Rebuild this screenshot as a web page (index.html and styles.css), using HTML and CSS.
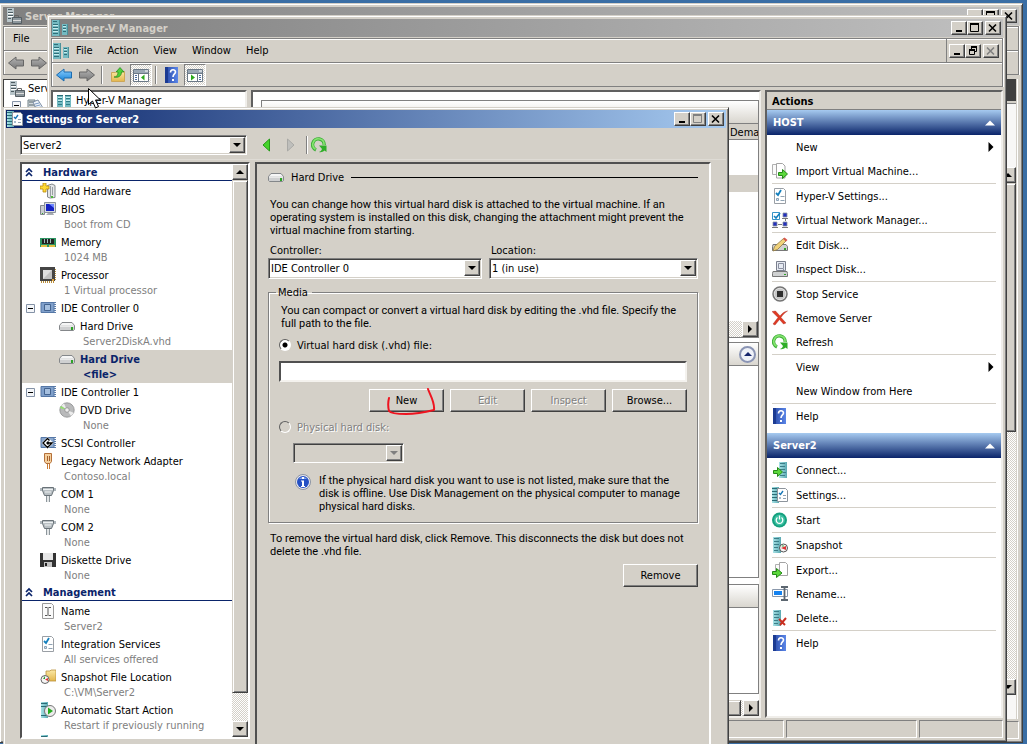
FILE: index.html
```html
<!DOCTYPE html>
<html lang="en">
<head>
<meta charset="UTF-8">
<title>Hyper-V Manager</title>
<link rel="stylesheet" href="styles.css">
</head>
<body>

<!-- Icon set, 16x16 -->
<svg class="sprite" aria-hidden="true">
  <defs>
    <linearGradient id="gBlue" x2="0" y2="1"><stop offset="0" stop-color="#8fd0ff"/><stop offset="1" stop-color="#1583d8"/></linearGradient>
    <linearGradient id="gGray" x2="0" y2="1"><stop offset="0" stop-color="#b4b4b4"/><stop offset="1" stop-color="#777"/></linearGradient>
    <linearGradient id="gTeal"><stop offset="0" stop-color="#a8e2e6"/><stop offset="1" stop-color="#5aa9b2"/></linearGradient>
    <linearGradient id="gHelp"><stop offset="0" stop-color="#2748a5"/><stop offset="1" stop-color="#5b86e8"/></linearGradient>
    <linearGradient id="gFolder" x2="0" y2="1"><stop offset="0" stop-color="#fbe9a6"/><stop offset="1" stop-color="#e3b64c"/></linearGradient>
  </defs>
  <symbol id="i-back" viewBox="0 0 16 16"><path d="M.5 8 8 2v3h7.500v6H8v3z" fill="url(#gBlue)" stroke="#1c6cb0"/></symbol>
  <symbol id="i-back-off" viewBox="0 0 16 16"><path d="M.5 8 8 2v3h7.500v6H8v3z" fill="url(#gGray)" stroke="#666"/></symbol>
  <symbol id="i-fwd-off" viewBox="0 0 16 16"><path d="M15.500 8 8 2v3H.500v6H8v3z" fill="url(#gGray)" stroke="#666"/></symbol>
  <symbol id="i-rack" viewBox="0 0 16 16">
    <path d="M0 0h8v16H0z" fill="#74bac2"/><path d="M1 1.500h4M1 4.500h5M1 7.500h5M1 10.500h5M1 13.500h5" stroke="#2f6f79"/><path d="M1 5.500h5M1 8.500h5M1 11.500h5" stroke="#c6edef"/><path d="M7.500 0v16" stroke="#4c929b"/>
    <path d="M10 4h6v11h-6z" fill="#74bac2"/><path d="M11 5.500h3M11 8.500h3M11 11.500h3" stroke="#2f6f79"/><path d="M11 6.500h3M11 9.500h3" stroke="#c6edef"/><path d="M15.500 4v11" stroke="#4c929b"/>
  </symbol>
  <symbol id="i-racks" viewBox="0 0 16 16">
    <path d="M1 2h6v13H1zM9 2h6v13H9z" fill="#74bac2"/><path d="M1 2.500h6M9 2.500h6" stroke="#2b6c76"/><path d="M2 5.500h4M2 8.500h4M2 11.500h4M10 5.500h4M10 8.500h4M10 11.500h4" stroke="#2f7d88"/><path d="M2 4.500h4M10 4.500h4M2 7.500h4M10 7.500h4" stroke="#c6edef"/>
  </symbol>
  <symbol id="i-server" viewBox="0 0 16 16">
    <path d="M1 0h7v14H1z" fill="#b7c4c9"/><path d="M2 1.500h4M2 4.500h5M2 7.500h5M2 10.500h3" stroke="#4c5b61"/><path d="M2 5.500h5M2 8.500h5" stroke="#fff"/>
    <path d="M8.500 9.500v-2h4v2" fill="none" stroke="#666"/><path d="M6.500 9.500h9v6h-9z" fill="#8d979d" stroke="#555e64"/><path d="M7 12.500h8" stroke="#ddd"/>
  </symbol>
  <symbol id="i-roles" viewBox="0 0 16 16"><path d="M1 2h7v12H1z" fill="#d3dadd" stroke="#718087"/><path d="M2 4h5M2 7h5" stroke="#55646b"/><path d="m6 4 5-2 5 8-5 4z" fill="#eef3f8" stroke="#7c8ea5"/><path d="m8 6 4-1M9 8l4-1M10 10l4-1" stroke="#7c9cc4"/></symbol>
  <symbol id="i-up" viewBox="0 0 16 16"><path d="M1.500 5.500h4l1-1h8v10h-13z" fill="url(#gFolder)" stroke="#cda657"/><path d="M4 10c3 0 4-2 4-5H6l4-4.500L14 5h-2.500c0 4-3 6-7.500 5z" fill="#4fd138" stroke="#23831a" stroke-width=".7"/></symbol>
  <symbol id="i-pane-l" viewBox="0 0 16 16"><path d="M.5 2.500h15v12H.5z" fill="#fff" stroke="#6b7886"/><path d="M1 3h14v3H1z" fill="#9aa7b4"/><path d="M12 4h3" stroke="#fff"/><path d="M5.500 6v8M1 6.500h14" stroke="#6b7886"/><path d="M2 8.500h2M2 10.500h2M2 12.500h2" stroke="#4a6ba0"/><path d="M11.500 7.500v6L8 10.500z" fill="#2aa81c"/></symbol>
  <symbol id="i-pane-r" viewBox="0 0 16 16"><path d="M.5 2.500h15v12H.5z" fill="#fff" stroke="#6b7886"/><path d="M1 3h14v3H1z" fill="#9aa7b4"/><path d="M12 4h3" stroke="#fff"/><path d="M10.500 6v8M1 6.500h14" stroke="#6b7886"/><path d="M12 8.500h2M12 10.500h2M12 12.500h2" stroke="#4a6ba0"/><path d="M4 7.500v6l4-3z" fill="#2aa81c"/></symbol>
  <symbol id="i-help" viewBox="0 0 16 16"><path d="M1 0h13v16H1z" fill="url(#gHelp)"/><path d="M1 0h3v16H1z" fill="#1c3b92"/><path d="M6.500 5.500c0-3.500 5-3.500 5-.500 0 2-2.500 2-2.500 5" fill="none" stroke="#fff" stroke-width="1.600"/><path d="M8 12h2v2H8z" fill="#fff"/></symbol>
  <symbol id="i-settings" viewBox="0 0 16 16"><path d="M0 0h7v16H0z" fill="url(#gTeal)"/><path d="M0 1.500h6M0 4.500h5M0 7.500h5M0 10.500h5M0 13.500h5" stroke="#2b6c76"/><path d="M5.500 1.500h8l2 2v11h-10z" fill="#fff" stroke="#8d949c"/><path d="m7 6 1.500 1.500L11 4" fill="none" stroke="#1877b8" stroke-width="1.400"/><path d="M11 8.500h3M11 11.500h3" stroke="#8fa2b3"/><path d="M7 10h2v2H7z" fill="#a7bccd"/></symbol>
  <symbol id="i-check" viewBox="0 0 16 16"><path d="M2.500.500h9l2 2v13h-11z" fill="#fff" stroke="#9a9fa5"/><path d="m4 5 2 2 3-5" fill="none" stroke="#1480be" stroke-width="1.800"/><path d="M4.500 10.500h2v2h-2z" fill="#dce6ee" stroke="#8ba2b6"/><path d="M8.500 8.500h4M8.500 12.500h4" stroke="#8fa2b3"/></symbol>
  <symbol id="i-tri-l" viewBox="0 0 16 16"><path d="M11.500 2v12L5 8z" fill="#45d32b" stroke="#259a18"/></symbol>
  <symbol id="i-tri-r" viewBox="0 0 16 16"><path d="M5.500 2v12L12 8z" fill="#bfbfbc" stroke="#a9a9a6"/></symbol>
  <symbol id="i-refresh" viewBox="0 0 16 16"><path d="M5 13A5.800 5.800 0 1 1 13.200 8" fill="none" stroke="#3fae3a" stroke-width="3.400"/><path d="M4.500 12.200A5.600 5.600 0 1 1 13 8" fill="none" stroke="#86e570" stroke-width="1.600"/><path d="M8 8.500h7.500V15l-2-1.500c-1.500 1.500-3.500 2-5.500 1.500 1.500-.5 2.500-1.500 3-3z" fill="#2fae28"/></symbol>
  <symbol id="i-chev" viewBox="0 0 8 10"><path d="m1 5 3-3 3 3M1 9l3-3 3 3" fill="none" stroke="#0a246a" stroke-width="1.700"/></symbol>
  <symbol id="i-minus" viewBox="0 0 9 9"><path d="M.5.500h8v8h-8z" fill="#f4f6f9" stroke="#8492a6"/><path d="M2 4.500h5" stroke="#000"/></symbol>
  <symbol id="i-add" viewBox="0 0 16 16"><path d="M7.500 2.500 12 1l3 1.500v12L10 15l-2.500-1z" fill="#e4e6e7" stroke="#83898d"/><path d="M10.500 3v11M12.500 4v8" stroke="#9aa0a4"/><path d="M11 13h2v2h-2z" fill="#4fb83a"/><path d="M3 0h3v3h3v3H6v3H3V6H0V3h3z" fill="#ffd934" stroke="#b98a10" stroke-width=".8"/></symbol>
  <symbol id="i-bios" viewBox="0 0 16 16"><path d="M.5 4.500h4v9h-4z" fill="#c8ccd0" stroke="#82888e"/><path d="M2 12h1v1H2z" fill="#2eae22"/><path d="M4.500 1.500h11v10h-11z" fill="#d8dce2" stroke="#8b929b"/><path d="M6 3h8v7H6z" fill="#1422c2"/><path d="M9 3h5v4z" fill="#6d86ff"/><path d="M8 12h5l1 2H6z" fill="#a6abb2"/></symbol>
  <symbol id="i-memory" viewBox="0 0 16 16"><path d="M0 4h16v9H0z" fill="#2c9461"/><path d="M1 11h6v2H1zM9 11h6v2H9z" fill="#e2bf45"/><path d="M2 5h12v5H2z" fill="#222"/><path d="M4.500 5v4M7.500 5v4M10.500 5v4" stroke="#9bb"/></symbol>
  <symbol id="i-cpu" viewBox="0 0 16 16"><path d="M1 15h14M15 2v12" stroke="#b98f3c" stroke-width="2" stroke-dasharray="1 1"/><path d="M0 0h15v14H0z" fill="#454545"/><path d="M3 3h9v9H3z" fill="#c0c0c0"/><path d="M3 3h9L3 12z" fill="#dedede"/><path d="M12 12h2v2h-2z" fill="#e0a13a"/></symbol>
  <symbol id="i-ide" viewBox="0 0 16 16"><path d="M1 2.500h13v10H1z" fill="#7f9fca" stroke="#5577a6"/><path d="M4.500 4.500h6v6h-6z" fill="#a5bfdf" stroke="#43638f"/><path d="M15 2v12" stroke="#5b7ca9" stroke-width="2" stroke-dasharray="1 1"/></symbol>
  <symbol id="i-scsi" viewBox="0 0 16 16"><path d="M1 2.500h13v10H1z" fill="#8aa7cd" stroke="#5577a6"/><path d="M15 2v12" stroke="#5b7ca9" stroke-width="2" stroke-dasharray="1 1"/><path d="m7.500 2 6 6-6 6-6-6z" fill="#fff"/><path d="m9.500 5.500-2-2L3 8l4.500 4.500L12 8H7M8.500 6.500 7 8l1.500 1.500" fill="none" stroke="#000" stroke-width="1.400"/></symbol>
  <symbol id="i-hdd" viewBox="0 0 16 16"><path d="m3 4.500 10 0 2.500 3v4l-1 1h-13l-1-1v-4z" fill="#cfd0d1" stroke="#84878a"/><path d="M3.500 5h9L15 7.500H1z" fill="#f6f6f6"/><path d="M1 8.500h14" stroke="#e8e8e8"/><path d="M12 9h2v3h-2z" fill="#2da326"/></symbol>
  <symbol id="i-dvd" viewBox="0 0 16 16"><circle cx="8" cy="8" r="7.200" fill="#b9babb" stroke="#8c8d8e" stroke-width=".8"/><path d="M8 8 2 3.500 5 1.500zM8 8l7 3-3 3z" fill="#ececec"/><path d="M8 8 1 6l1-2z" fill="#8fe36a"/><circle cx="8" cy="8" r="2.300" fill="#eee" stroke="#999"/></symbol>
  <symbol id="i-net" viewBox="0 0 16 16"><path d="M4.500.500h7v8l-1.500 2H6l-1.500-2z" fill="#f4cf9d" stroke="#b4703a"/><path d="M7.500 3v5M9.500 3v5" stroke="#a5602c"/><path d="M7 11h1v5H7zM9 11h1v5H9z" fill="#c77a35"/></symbol>
  <symbol id="i-com" viewBox="0 0 16 16"><path d="M0 2h3v3H0zM13 2h3v3h-3z" fill="#aeb6bb"/><path d="M2.500 1.500h11v3l-2 5h-7l-2-5z" fill="#b9c0c4" stroke="#697278"/><path d="M3 3.500h10M5 6h6" stroke="#eef1f2"/><path d="M6 10h1v6H6zM9 10h1v6H9z" fill="#8d969b"/><path d="M8 10v6" stroke="#c5cbce"/></symbol>
  <symbol id="i-floppy" viewBox="0 0 16 16"><path d="M0 1h16v14H0z" fill="#333"/><path d="M3 1h10v7H3z" fill="#e6e6e6"/><path d="M4 10h8v5H4z" fill="#c5c5c5"/><path d="M5 11h2v3H5z" fill="#222"/></symbol>
  <symbol id="i-name" viewBox="0 0 16 16"><path d="M2.500.500h9l2 2v13h-11z" fill="#fafafa" stroke="#9a9a9a"/><path d="M5 4.500h2.500M8.500 4.500H11M5 12.500h2.500M8.500 12.500H11M8 5v7" fill="none" stroke="#555"/></symbol>
  <symbol id="i-snapfolder" viewBox="0 0 16 16"><path d="M6 2h4l1-1h5v11H6z" fill="url(#gFolder)" stroke="#b9913b" stroke-width=".8"/><circle cx="5" cy="10.500" r="4" fill="#f5f5f5" stroke="#666"/><path d="M5 10.500 8 9v3z" fill="#d33"/><path d="M5 7v3H3z" fill="#2a9d2a"/></symbol>
  <symbol id="i-auto" viewBox="0 0 16 16"><path d="M1 0h7v16H1z" fill="url(#gTeal)"/><path d="M1 1.500h6M1 4.500h6M1 13.500h6" stroke="#2b6c76"/><circle cx="10" cy="9" r="5.500" fill="#ececec" stroke="#777"/><path d="M8 5.500v7L13 9z" fill="#27ac20"/></symbol>
  <symbol id="i-info" viewBox="0 0 16 16"><circle cx="8" cy="8" r="7.500" fill="#e8e8ee" stroke="#8b93a4"/><circle cx="8" cy="8" r="6" fill="#2450c4"/><path d="M4 5a5 5 0 0 1 8 0z" fill="#7d9eee"/><path d="M7 3h2v2H7zM6 6.500h3V12h1v1H6v-1h1V7.500H6z" fill="#fff"/></symbol>
  <symbol id="i-import" viewBox="0 0 16 16"><path d="M.5 1.500h6l2 2v8h-8z" fill="#fafafa" stroke="#b0b0b0"/><path d="M4.500.500h6l2.500 2.500v12H4.500z" fill="#fff" stroke="#a4a4a4"/><path d="M6.500 9.500h4v-3l5 4.500-5 4.500v-3h-4z" fill="#5cd83c" stroke="#258a18"/></symbol>
  <symbol id="i-vnet" viewBox="0 0 16 16"><path d="M.5.500h7v7h-7z" fill="#fff" stroke="#3593c7"/><path d="m2 4 2 2 4-5" fill="none" stroke="#1480be" stroke-width="1.600"/><path d="M11 1h4v4h-4zM1 10h4v4H1zM11 10h4v4h-4z" fill="#2330bd" stroke="#8a93a0" stroke-width=".8"/><path d="M10 6.500h6M0 15.500h6M10 15.500h6M6 12.500h4M13.500 7v2" stroke="#777"/></symbol>
  <symbol id="i-editdisk" viewBox="0 0 16 16"><path d="M1 7.500h13l1.500 2v4H.500v-4z" fill="#cfd1d2" stroke="#777"/><path d="M12 11h2v2h-2z" fill="#2da326"/><path d="m1 14 1.500-4.500 9-8L14 4l-8.500 8.500z" fill="#f0d27b" stroke="#8f7a45" stroke-width=".8"/><path d="m11 2 1.500-1.500 3 2.500L14 4.500z" fill="#d7564b"/></symbol>
  <symbol id="i-inspect" viewBox="0 0 16 16"><path d="M1 10.500h14l.500 2v3H.500v-3z" fill="#cfd1d2" stroke="#777"/><path d="M4.500.500h9v9h-9z" fill="#e6eaf2" stroke="#7a7f8d"/><path d="M6.500 2.500h5v5h-5zM11 8l2 2" fill="none" stroke="#8a90a0"/><path d="M12 13h2v1h-2z" fill="#2da326"/></symbol>
  <symbol id="i-stop" viewBox="0 0 16 16"><circle cx="8" cy="8" r="7" fill="#e9e9e9" stroke="#757575" stroke-width="1.500"/><circle cx="8" cy="8" r="5.500" fill="#c8c8c8"/><path d="M5 5h6v6H5z" fill="#2f2f2f"/></symbol>
  <symbol id="i-remove" viewBox="0 0 16 16"><path d="M0 1.500 3.500 1 8 6C10 3.500 12 1.500 15.500 1c-3 2-5 4-6.500 6.500l5 5.500-2.500 1L7.500 9.500 3 15l-2-1 5-6.500z" fill="#df3a24" stroke="#a7261a" stroke-width=".4"/></symbol>
  <symbol id="i-connect" viewBox="0 0 16 16"><path d="M7 0h8v16H7z" fill="url(#gTeal)"/><path d="M8 1.500h5M8 4.500h5M8 7.500h5M11 10.500h3M8 13.500h5" stroke="#3c7e88"/><path d="M1.500 8.500h4v-3l5 4.500-5 4.500v-3h-4z" fill="#5cd83c" stroke="#258a18"/></symbol>
  <symbol id="i-start" viewBox="0 0 16 16"><circle cx="7.500" cy="8" r="7.500" fill="#15a17f"/><circle cx="7.500" cy="8" r="5.500" fill="#3cc0a2"/><path d="M5.500 5.500a3.300 3.300 0 1 0 4 0M7.500 3.500v4" fill="none" stroke="#fff" stroke-width="1.300"/></symbol>
  <symbol id="i-snap" viewBox="0 0 16 16"><path d="M1 0h8v16H1z" fill="url(#gTeal)"/><path d="M2 1.500h5M2 4.500h5M2 7.500h5M2 10.500h4M2 13.500h4" stroke="#3c7e88"/><circle cx="11.500" cy="11" r="4" fill="#f5f5f5" stroke="#555"/><path d="M9 11l5-2v4z" fill="#d33"/><path d="M11.500 8v2l-2-1z" fill="#2a9d2a"/></symbol>
  <symbol id="i-export" viewBox="0 0 16 16"><path d="M3.500 2.500h6l2 2v8h-8z" fill="#fafafa" stroke="#b0b0b0"/><path d="M7.500.500h6l2 2v11h-8z" fill="#fff" stroke="#a4a4a4"/><path d="M.5 9.500h4v-3L10 11l-5.500 4.500v-3h-4z" fill="#5cd83c" stroke="#258a18"/></symbol>
  <symbol id="i-rename" viewBox="0 0 16 16"><path d="M.5 3.500h15v7H.5z" fill="#fff" stroke="#8a98ab"/><path d="M2 5h8v4H2z" fill="#1482f0"/><path d="M9 1h3l.500 1L13 1h3M12.500 2v11M9 14h3l.500-1 .500 1h3" fill="none" stroke="#5c6670" stroke-width="1.800"/></symbol>
  <symbol id="i-delete" viewBox="0 0 16 16"><path d="M1 0h8v16H1z" fill="url(#gTeal)"/><path d="M2 1.500h5M2 4.500h5M2 7.500h5M2 10.500h4M2 13.500h4" stroke="#3c7e88"/><path d="m7 9 6 6M14 8l-6 7" stroke="#c92e20" stroke-width="2"/></symbol>
  <symbol id="i-min" viewBox="0 0 12 10"><path d="M3 8h6" stroke="currentColor" stroke-width="2"/></symbol>
  <symbol id="i-max" viewBox="0 0 12 10"><path d="M1.500 1.500h8v7h-8z" fill="none" stroke="currentColor"/><path d="M1 1h9" stroke="currentColor" stroke-width="2"/></symbol>
  <symbol id="i-restore" viewBox="0 0 12 10"><path d="M4.500 3V1.500h5v4H8M2.500 4.500h5v4h-5z" fill="none" stroke="currentColor"/><path d="M4 1h6M2 4h6" stroke="currentColor" stroke-width="2"/></symbol>
  <symbol id="i-x" viewBox="0 0 12 10"><path d="m2 1.500 7 7M9 1.500l-7 7" stroke="currentColor" stroke-width="1.600"/></symbol>
  <symbol id="i-down" viewBox="0 0 8 8"><path d="M0 2h8L4 6z" fill="currentColor"/></symbol>
  <symbol id="i-uparrow" viewBox="0 0 8 8"><path d="M0 6h8L4 2z" fill="currentColor"/></symbol>
  <symbol id="i-right" viewBox="0 0 8 8"><path d="M2 0v8l4-4z" fill="currentColor"/></symbol>
</svg>

<!-- Server Manager, in the back -->
<section class="window server-manager">
  <header class="caption inactive">
    <svg class="icon"><use href="#i-server"/></svg>
    <h2>Server Manager</h2>
    <div class="caption-buttons">
      <button class="cap" aria-label="Minimize"><svg><use href="#i-min"/></svg></button>
      <button class="cap" aria-label="Maximize"><svg><use href="#i-max"/></svg></button>
      <button class="cap close" aria-label="Close"><svg><use href="#i-x"/></svg></button>
    </div>
  </header>
  <nav class="band sm-menu"><a href="#">File</a><a href="#">Action</a></nav>
  <div class="band sm-tools">
    <svg class="icon"><use href="#i-back-off"/></svg>
    <svg class="icon"><use href="#i-fwd-off"/></svg>
  </div>
  <div class="sm-body">
    <div class="sm-tree">
      <div class="sm-node"><svg class="icon"><use href="#i-server"/></svg>Server Manager</div>
      <div class="sm-node child"><svg class="expander"><use href="#i-minus"/></svg><svg class="icon"><use href="#i-roles"/></svg></div>
    </div>
    <div class="sm-right">
      <div class="sm-dark"></div>
      <div class="sm-head"></div>
      <div class="vscroll">
        <button class="sb" aria-label="Scroll up"><svg><use href="#i-uparrow"/></svg></button>
        <div class="thumb"></div>
        <div class="track"></div>
        <button class="sb" aria-label="Scroll down"><svg><use href="#i-down"/></svg></button>
      </div>
      <div class="sm-foot"></div>
    </div>
  </div>
  <footer class="status"><span></span></footer>
</section>

<!-- Hyper-V Manager -->
<section class="window hyperv">
  <header class="caption inactive">
    <svg class="icon"><use href="#i-rack"/></svg>
    <h2>Hyper-V Manager</h2>
    <div class="caption-buttons">
      <button class="cap" aria-label="Minimize"><svg><use href="#i-min"/></svg></button>
      <button class="cap" aria-label="Maximize"><svg><use href="#i-max"/></svg></button>
      <button class="cap close" aria-label="Close"><svg><use href="#i-x"/></svg></button>
    </div>
  </header>
  <nav class="band menu">
    <svg class="icon"><use href="#i-rack"/></svg>
    <a href="#">File</a><a href="#">Action</a><a href="#">View</a><a href="#">Window</a><a href="#">Help</a>
    <div class="caption-buttons mdi">
      <button class="cap" aria-label="Minimize"><svg><use href="#i-min"/></svg></button>
      <button class="cap" aria-label="Restore"><svg><use href="#i-restore"/></svg></button>
      <button class="cap close off" aria-label="Close" disabled><svg><use href="#i-x"/></svg></button>
    </div>
  </nav>
  <div class="band tools">
    <button class="tool" aria-label="Back"><svg class="icon"><use href="#i-back"/></svg></button>
    <button class="tool" aria-label="Forward"><svg class="icon"><use href="#i-fwd-off"/></svg></button>
    <i class="divider"></i>
    <button class="tool" aria-label="Up"><svg class="icon"><use href="#i-up"/></svg></button>
    <button class="tool pressed" aria-label="Console tree"><svg class="icon"><use href="#i-pane-l"/></svg></button>
    <i class="divider"></i>
    <button class="tool" aria-label="Help"><svg class="icon"><use href="#i-help"/></svg></button>
    <button class="tool pressed" aria-label="Action pane"><svg class="icon"><use href="#i-pane-r"/></svg></button>
  </div>
  <div class="panes">
    <div class="pane console-tree">
      <div class="console-node"><svg class="icon"><use href="#i-racks"/></svg>Hyper-V Manager</div>
    </div>
    <div class="pane center">
      <div class="box vms">
        <div class="box-head"></div>
        <div class="cols"><span>Dema</span></div>
        <div class="vm-list"><div class="vm-selected"></div></div>
        <div class="hscroll"><button class="sb" aria-label="Scroll right"><svg><use href="#i-right"/></svg></button></div>
      </div>
      <div class="box snapshots">
        <div class="box-head"><button class="round" aria-label="Collapse"><svg><use href="#i-uparrow"/></svg></button></div>
      </div>
      <div class="box details"><div class="box-head"></div></div>
      <div class="hscroll bottom"><div class="thumb"></div><i class="gap"></i><button class="sb" aria-label="Scroll right"><svg><use href="#i-right"/></svg></button></div>
    </div>
    <aside class="pane actions">
      <h3>Actions</h3>
      <h4>HOST<svg><use href="#i-uparrow"/></svg></h4>
      <ul>
        <li><a href="#"><i class="icon"></i>New<svg class="more"><use href="#i-right"/></svg></a></li>
        <li><a href="#"><svg class="icon"><use href="#i-import"/></svg>Import Virtual Machine...</a></li>
        <li class="sep"><a href="#"><svg class="icon"><use href="#i-check"/></svg>Hyper-V Settings...</a></li>
        <li><a href="#"><svg class="icon"><use href="#i-vnet"/></svg>Virtual Network Manager...</a></li>
        <li class="sep"><a href="#"><svg class="icon"><use href="#i-editdisk"/></svg>Edit Disk...</a></li>
        <li><a href="#"><svg class="icon"><use href="#i-inspect"/></svg>Inspect Disk...</a></li>
        <li class="sep"><a href="#"><svg class="icon"><use href="#i-stop"/></svg>Stop Service</a></li>
        <li><a href="#"><svg class="icon"><use href="#i-remove"/></svg>Remove Server</a></li>
        <li><a href="#"><svg class="icon"><use href="#i-refresh"/></svg>Refresh</a></li>
        <li class="sep"><a href="#"><i class="icon"></i>View<svg class="more"><use href="#i-right"/></svg></a></li>
        <li><a href="#"><i class="icon"></i>New Window from Here</a></li>
        <li class="sep"><a href="#"><svg class="icon"><use href="#i-help"/></svg>Help</a></li>
      </ul>
      <h4>Server2<svg><use href="#i-uparrow"/></svg></h4>
      <ul>
        <li><a href="#"><svg class="icon"><use href="#i-connect"/></svg>Connect...</a></li>
        <li class="sep"><a href="#"><svg class="icon"><use href="#i-settings"/></svg>Settings...</a></li>
        <li class="sep"><a href="#"><svg class="icon"><use href="#i-start"/></svg>Start</a></li>
        <li class="sep"><a href="#"><svg class="icon"><use href="#i-snap"/></svg>Snapshot</a></li>
        <li class="sep"><a href="#"><svg class="icon"><use href="#i-export"/></svg>Export...</a></li>
        <li><a href="#"><svg class="icon"><use href="#i-rename"/></svg>Rename...</a></li>
        <li><a href="#"><svg class="icon"><use href="#i-delete"/></svg>Delete...</a></li>
        <li class="sep"><a href="#"><svg class="icon"><use href="#i-help"/></svg>Help</a></li>
      </ul>
    </aside>
  </div>
  <footer class="status"><span></span><span class="mid"></span><span class="last"></span></footer>
</section>

<!-- Settings dialog -->
<section class="window settings">
  <header class="caption">
    <svg class="icon"><use href="#i-settings"/></svg>
    <h1>Settings for Server2</h1>
    <div class="caption-buttons">
      <button class="cap" aria-label="Minimize"><svg><use href="#i-min"/></svg></button>
      <button class="cap off" aria-label="Maximize" disabled><svg><use href="#i-max"/></svg></button>
      <button class="cap close" aria-label="Close"><svg><use href="#i-x"/></svg></button>
    </div>
  </header>
  <div class="dialog-tools">
    <div class="combo vm-select">
      <select aria-label="Virtual machine"><option>Server2</option></select>
      <span class="drop"><svg><use href="#i-down"/></svg></span>
    </div>
    <button class="nav" aria-label="Previous"><svg class="icon"><use href="#i-tri-l"/></svg></button>
    <button class="nav" aria-label="Next" disabled><svg class="icon"><use href="#i-tri-r"/></svg></button>
    <i class="divider"></i>
    <button class="nav" aria-label="Refresh"><svg class="icon"><use href="#i-refresh"/></svg></button>
  </div>
  <div class="dialog-body">
    <div class="sunken tree">
      <div class="tree-list">
        <h3><svg class="chev"><use href="#i-chev"/></svg>Hardware</h3>
        <div class="node"><svg class="icon"><use href="#i-add"/></svg><span>Add Hardware</span></div>
        <div class="node"><svg class="icon"><use href="#i-bios"/></svg><span>BIOS</span><small>Boot from CD</small></div>
        <div class="node"><svg class="icon"><use href="#i-memory"/></svg><span>Memory</span><small>1024 MB</small></div>
        <div class="node"><svg class="icon"><use href="#i-cpu"/></svg><span>Processor</span><small>1 Virtual processor</small></div>
        <div class="node parent"><svg class="expander"><use href="#i-minus"/></svg><svg class="icon"><use href="#i-ide"/></svg><span>IDE Controller 0</span></div>
        <div class="node nested"><svg class="icon"><use href="#i-hdd"/></svg><span>Hard Drive</span><small>Server2DiskA.vhd</small></div>
        <div class="node nested selected"><svg class="icon"><use href="#i-hdd"/></svg><span>Hard Drive</span><small>&lt;file&gt;</small></div>
        <div class="node parent"><svg class="expander"><use href="#i-minus"/></svg><svg class="icon"><use href="#i-ide"/></svg><span>IDE Controller 1</span></div>
        <div class="node nested"><svg class="icon"><use href="#i-dvd"/></svg><span>DVD Drive</span><small>None</small></div>
        <div class="node"><svg class="icon"><use href="#i-scsi"/></svg><span>SCSI Controller</span></div>
        <div class="node"><svg class="icon"><use href="#i-net"/></svg><span>Legacy Network Adapter</span><small>Contoso.local</small></div>
        <div class="node"><svg class="icon"><use href="#i-com"/></svg><span>COM 1</span><small>None</small></div>
        <div class="node"><svg class="icon"><use href="#i-com"/></svg><span>COM 2</span><small>None</small></div>
        <div class="node"><svg class="icon"><use href="#i-floppy"/></svg><span>Diskette Drive</span><small>None</small></div>
        <h3><svg class="chev"><use href="#i-chev"/></svg>Management</h3>
        <div class="node"><svg class="icon"><use href="#i-name"/></svg><span>Name</span><small>Server2</small></div>
        <div class="node"><svg class="icon"><use href="#i-check"/></svg><span>Integration Services</span><small>All services offered</small></div>
        <div class="node"><svg class="icon"><use href="#i-snapfolder"/></svg><span>Snapshot File Location</span><small>C:\VM\Server2</small></div>
        <div class="node"><svg class="icon"><use href="#i-auto"/></svg><span>Automatic Start Action</span><small>Restart if previously running</small></div>
        <div class="node"><svg class="icon"><use href="#i-auto"/></svg></div>
      </div>
      <div class="vscroll">
        <button class="sb" aria-label="Scroll up"><svg><use href="#i-uparrow"/></svg></button>
        <div class="thumb"></div>
        <div class="track"></div>
        <button class="sb" aria-label="Scroll down"><svg><use href="#i-down"/></svg></button>
      </div>
    </div>

    <form class="sunken page">
      <h2 class="page-title"><svg class="icon"><use href="#i-hdd"/></svg>Hard Drive</h2>
      <p class="intro">You can change how this virtual hard disk is attached to the virtual machine. If an<br>operating system is installed on this disk, changing the attachment might prevent the<br>virtual machine from starting.</p>
      <div class="pickers">
        <div class="field">
          <label for="controller">Controller:</label>
          <div class="combo">
            <select id="controller"><option>IDE Controller 0</option></select>
            <span class="drop"><svg><use href="#i-down"/></svg></span>
          </div>
        </div>
        <div class="field">
          <label for="location">Location:</label>
          <div class="combo">
            <select id="location"><option>1 (in use)</option></select>
            <span class="drop"><svg><use href="#i-down"/></svg></span>
          </div>
        </div>
      </div>
      <fieldset>
        <legend>Media</legend>
        <p>You can compact or convert a virtual hard disk by editing the .vhd file. Specify the<br>full path to the file.</p>
        <div class="radio">
          <input type="radio" id="vhd" name="media" checked>
          <label for="vhd">Virtual hard disk (.vhd) file:</label>
        </div>
        <input type="text" class="path" aria-label="Path of the .vhd file">
        <div class="buttons">
          <div class="marked">
            <button type="button" class="btn">New</button>
            <svg class="ink" viewBox="0 0 50 30"><path d="M2 11C1 15 1 20 2 24c2 3 10 3 17 3 10 0 20-2 28-4C48 15 43 8 41 2" fill="none" stroke="#ee1420" stroke-width="2" stroke-linecap="round" stroke-linejoin="round"/></svg>
          </div>
          <button type="button" class="btn" disabled>Edit</button>
          <button type="button" class="btn" disabled>Inspect</button>
          <button type="button" class="btn">Browse...</button>
        </div>
        <div class="radio off">
          <input type="radio" id="physical" name="media" disabled>
          <label for="physical">Physical hard disk:</label>
        </div>
        <div class="combo disk off">
          <select aria-label="Physical hard disk" disabled><option></option></select>
          <span class="drop"><svg><use href="#i-down"/></svg></span>
        </div>
        <div class="note">
          <svg class="icon"><use href="#i-info"/></svg>
          <p>If the physical hard disk you want to use is not listed, make sure that the<br>disk is offline. Use Disk Management on the physical computer to manage<br>physical hard disks.</p>
        </div>
      </fieldset>
      <p class="outro">To remove the virtual hard disk, click Remove. This disconnects the disk but does not<br>delete the .vhd file.</p>
      <button type="button" class="btn remove">Remove</button>
    </form>
  </div>
</section>

<svg class="pointer" viewBox="0 0 13 21"><path d="M.5.500v16l4-3.500 3 7 3-1.500-3-6.500h5z" fill="#fff" stroke="#000"/></svg>

</body>
</html>
```

FILE: styles.css
```css
* {
  box-sizing: border-box;
}

body {
  margin: 0;
  height: 100vh;
  overflow: hidden;
  position: relative;
  background: #3a6ea5;
  color: #000;
  font: 11px/13px "DejaVu Sans Condensed", Tahoma, "DejaVu Sans", sans-serif;
}

h1, h2, h3, h4, p, ul {
  margin: 0;
  padding: 0;
  font-size: inherit;
}

a {
  color: inherit;
  text-decoration: none;
}

button, select, input {
  font: inherit;
  color: inherit;
  margin: 0;
  padding: 0;
}

svg {
  display: block;
}

.sprite {
  position: absolute;
  width: 0;
  height: 0;
}

.icon {
  width: 16px;
  height: 16px;
  flex: none;
}

.expander {
  width: 9px;
  height: 9px;
  flex: none;
}

/* Windows */
.window {
  position: absolute;
  display: flex;
  flex-direction: column;
  padding: 3px;
  background: #d4d0c8;
  border: 1px solid;
  border-color: #d4d0c8 #404040 #404040 #d4d0c8;
  box-shadow: inset 1px 1px #fff, inset -1px -1px #808080;
}

.server-manager {
  left: -1px;
  right: 4px;
  top: 3px;
  bottom: 1px;
}

.hyperv {
  left: 47px;
  right: 20px;
  top: 15px;
  bottom: 2px;
}

.settings {
  left: 3px;
  width: 726px;
  top: 107px;
  bottom: -6px;
  padding: 2px;
}

.caption {
  display: flex;
  align-items: center;
  gap: 3px;
  height: 18px;
  flex: none;
  padding: 0 2px 0 1px;
  background: linear-gradient(90deg, #0a246a, #a6caf0);
  color: #fff;
}

.caption.inactive {
  background: linear-gradient(90deg, #808080, #c0c0c0);
  color: #d4d0c8;
}

.caption-buttons {
  display: flex;
  margin-left: auto;
}

.cap, .sb, .drop {
  display: flex;
  align-items: center;
  justify-content: center;
  background: #d4d0c8;
  border: 1px solid;
  border-color: #fff #404040 #404040 #fff;
  box-shadow: inset -1px -1px #808080;
  color: #000;
  flex: none;
}

.cap {
  width: 16px;
  height: 14px;
}

.cap svg {
  width: 12px;
  height: 10px;
}

.cap.close {
  margin-left: 2px;
}

.cap.off {
  color: #808080;
}

.sb, .drop {
  width: 16px;
  height: 16px;
}

.sb svg, .drop svg {
  width: 8px;
  height: 8px;
}

/* Menu and tool bands */
.band {
  display: flex;
  align-items: center;
  height: 24px;
  flex: none;
  border: 1px solid #808080;
  border-top: 0;
  box-shadow: inset 1px 1px #fff, 1px 0 #fff;
}

.caption + .band {
  margin-top: 1px;
  height: 25px;
  border-top: 1px solid #808080;
}

.menu {
  padding-left: 1px;
}

.menu .icon {
  margin-right: 7px;
}

.menu a {
  margin-right: 15px;
}

.mdi {
  align-self: stretch;
  align-items: center;
  padding: 0 3px 0 2px;
  border-left: 1px solid #808080;
}

.tools {
  padding-left: 1px;
  gap: 1px;
}

.tool {
  display: flex;
  align-items: center;
  justify-content: center;
  width: 22px;
  height: 22px;
  border: 1px solid transparent;
  background: none;
}

.tool.pressed {
  border-color: #808080 #fff #fff #808080;
  background: repeating-conic-gradient(#fff 0 25%, #d4d0c8 0 50%) 0 0 / 2px 2px;
}

.divider {
  width: 2px;
  height: 18px;
  margin: 0 3px 0 2px;
  border-left: 1px solid #808080;
  border-right: 1px solid #fff;
}

/* Server Manager */
.server-manager .caption {
  padding-left: 3px;
}

.sm-menu {
  gap: 20px;
  padding-left: 9px;
}

.sm-tools {
  gap: 7px;
  padding-left: 4px;
}

.sm-body {
  flex: 1;
  display: flex;
  margin-top: 4px;
  min-height: 0;
}

.sm-tree {
  width: 200px;
  padding: 0 5px;
  background: #fff;
  border: 1px solid #404040;
}

.sm-node {
  display: flex;
  align-items: center;
  gap: 3px;
  height: 17px;
}

.sm-node.child {
  gap: 6px;
  padding-left: 3px;
}

.sm-right {
  flex: 1;
  display: flex;
  flex-direction: column;
  align-items: flex-end;
  margin-right: 1px;
  border-right: 1px solid #fff;
  padding-right: 1px;
}

.sm-dark {
  align-self: stretch;
  height: 22px;
  background: #404040;
}

.sm-head, .sm-foot {
  width: 16px;
  height: 64px;
  background: #f8f7f6;
  border-top: 1px solid #808080;
}

.sm-head {
  margin-top: 2px;
}

.sm-foot {
  height: 24px;
  border-top: 0;
}

.vscroll {
  display: flex;
  flex-direction: column;
  width: 16px;
  flex: none;
  background: #d4d0c8;
}

.sm-right .vscroll {
  flex: 1;
}

.thumb {
  flex: 1;
  border: 1px solid;
  border-color: #d4d0c8 #404040 #404040 #d4d0c8;
  box-shadow: inset 1px 1px #fff, inset -1px -1px #808080;
  background: #d4d0c8;
}

.track {
  flex: 1;
  background: repeating-conic-gradient(#fff 0 25%, #d4d0c8 0 50%) 0 0 / 2px 2px;
}

/* Hyper-V Manager panes */
.panes {
  flex: 1;
  display: flex;
  gap: 4px;
  margin-top: 3px;
  min-height: 0;
}

.pane {
  background: #fff;
  border: 2px solid;
  border-color: #606060 #f0eeea #f0eeea #606060;
}

.console-tree {
  width: 196px;
  padding-left: 3px;
}

.console-node {
  display: flex;
  align-items: center;
  gap: 4px;
  height: 17px;
}

.center {
  flex: 1;
  display: flex;
  flex-direction: column;
  padding: 8px 0 0 8px;
}

.box {
  display: flex;
  flex-direction: column;
  border: 1px solid #808080;
}

.box-head {
  display: flex;
  align-items: center;
  justify-content: flex-end;
  height: 23px;
  flex: none;
  padding-right: 2px;
  background: linear-gradient(#fff, #d9d6cf);
  border-bottom: 1px solid #808080;
}

.vms {
  height: 238px;
}

.cols {
  display: flex;
  justify-content: flex-end;
  height: 16px;
  background: #d4d0c8;
  border-bottom: 1px solid #808080;
}

.cols span {
  width: 29px;
  height: 15px;
  padding-left: 1px;
  line-height: 17px;
  overflow: hidden;
}

.vm-list {
  flex: 1;
  padding-top: 35px;
}

.vm-selected {
  height: 17px;
  background: #d4d0c8;
}

.hscroll {
  display: flex;
  justify-content: flex-end;
  height: 16px;
  background: repeating-conic-gradient(#fff 0 25%, #d4d0c8 0 50%) 0 0 / 2px 2px;
}

.hscroll.bottom {
  margin-top: auto;
}

.gap {
  width: 2px;
}

.snapshots {
  height: 236px;
  margin-top: 4px;
}

.details {
  height: 110px;
  margin-top: 6px;
}

.round {
  display: flex;
  align-items: center;
  justify-content: center;
  width: 17px;
  height: 17px;
  border: 2px solid #8a94b4;
  border-radius: 50%;
  background: #eef1f8;
  color: #14246c;
}

.round svg {
  width: 8px;
  height: 8px;
}

/* Actions pane */
.actions {
  width: 238px;
}

.actions h3 {
  height: 18px;
  padding: 3px 5px;
  background: #d4d0c8;
  border-bottom: 1px solid #808080;
}

.actions h4 {
  display: flex;
  align-items: center;
  justify-content: space-between;
  height: 25px;
  padding: 0 6px;
  background: linear-gradient(#a6caf0, #0a246a);
  color: #fff;
}

.actions h4 svg {
  width: 10px;
  height: 10px;
}

.actions ul {
  list-style: none;
  padding: 0 5px;
}

.actions ul + h4 {
  margin-top: 5px;
}

.actions li a {
  display: flex;
  align-items: center;
  gap: 8px;
  height: 24px;
}

.actions li.sep {
  border-top: 1px solid #d4d0c8;
}

.more {
  width: 10px;
  height: 10px;
  margin-left: auto;
}

.status {
  display: flex;
  gap: 2px;
  height: 18px;
  flex: none;
  margin-top: 2px;
}

.status span {
  flex: 1;
  border: 1px solid;
  border-color: #808080 #fff #fff #808080;
}

.status .mid {
  flex: none;
  width: 131px;
}

.status .last {
  flex: none;
  width: 84px;
}

/* Settings dialog */
.dialog-tools {
  display: flex;
  align-items: center;
  gap: 8px;
  height: 30px;
  flex: none;
  margin-top: 2px;
  padding: 1px 14px 0;
  border-bottom: 1px solid #dedbd5;
}

.combo {
  display: flex;
  height: 20px;
  padding: 1px;
  border: 1px solid;
  border-color: #808080 #fff #fff #808080;
  box-shadow: inset 1px 1px #404040, inset -1px -1px #d4d0c8;
  background: #fff;
}

.combo select {
  flex: 1;
  min-width: 0;
  appearance: none;
  border: 0;
  padding-left: 1px;
  background: none;
}

.combo.off {
  background: #d4d0c8;
}

.vm-select {
  width: 227px;
  margin-right: 3px;
}

.nav {
  border: 0;
  background: none;
}

.dialog-tools .divider {
  margin: 0 -5px 0 0;
}

.dialog-body {
  flex: 1;
  display: flex;
  gap: 5px;
  min-height: 0;
  padding: 2px 15px 0 14px;
}

.sunken {
  border: 2px solid;
  border-color: #505050 #fff #fff #505050;
}

.tree {
  display: flex;
  width: 230px;
  flex: none;
  margin-bottom: 8px;
  background: #fff;
}

.tree-list {
  flex: 1;
  overflow: hidden;
}

.tree h3 {
  display: flex;
  align-items: center;
  gap: 10px;
  height: 17px;
  margin-bottom: 1px;
  padding-left: 3px;
  border-bottom: 1px solid #0a246a;
  color: #0a246a;
}

.chev {
  width: 8px;
  height: 10px;
}

.node {
  display: grid;
  grid-template-columns: 16px 1fr;
  grid-auto-rows: 18px;
  column-gap: 5px;
  align-items: center;
  padding-left: 18px;
  white-space: nowrap;
}

.node.parent {
  grid-template-columns: 9px 16px 1fr;
  padding-left: 4px;
}

.node.nested {
  padding-left: 37px;
}

.node small {
  grid-column: 2;
  align-self: start;
  padding-left: 3px;
  font-size: 11px;
  line-height: 13px;
  color: #808080;
}

.node:has(small) {
  grid-template-rows: 18px 15px;
}

.node.selected, .node.selected small {
  color: #0a246a;
  font-weight: bold;
}

.node.selected {
  background: #d4d0c8;
}

.tree .thumb {
  flex: 513;
}

.tree .track {
  flex: 28;
}

.page {
  flex: 1;
  min-width: 0;
  padding: 5px 11px 0;
}

.page-title {
  display: flex;
  align-items: center;
  gap: 7px;
  height: 16px;
  font-weight: normal;
}

.page-title::after {
  content: "";
  flex: 1;
  border-top: 1px solid #000;
}

.page p {
  font-family: Roboto, Tahoma, sans-serif;
}

.intro {
  margin: 13px 0 0 2px;
  white-space: nowrap;
}

.pickers {
  display: grid;
  grid-template-columns: 214px 1fr;
  gap: 7px;
  margin-top: 7px;
}

.field label {
  display: block;
  margin: 0 0 1px 2px;
}

.field .combo {
  height: 21px;
}

fieldset {
  min-width: 0;
  margin: 7px 0 0;
  padding: 5px 10px 9px;
  border: 1px solid #808080;
  box-shadow: 1px 1px #fff, inset 1px 1px #fff;
}

legend {
  padding: 0 4px 0 2px;
  margin-left: -3px;
}

fieldset p {
  padding-left: 2px;
  white-space: nowrap;
}

.radio {
  display: flex;
  align-items: center;
  gap: 6px;
  height: 16px;
  margin-top: 7px;
}

.radio input {
  appearance: none;
  width: 12px;
  height: 12px;
  border: 1px solid;
  border-color: #606060 #fff #fff #606060;
  border-radius: 50%;
  background: #fff;
}

.radio input:checked {
  background: radial-gradient(circle, #000 2px, #fff 3px);
}

.radio input:disabled {
  background: #d4d0c8;
}

.radio.off label, .btn:disabled {
  color: #808080;
  text-shadow: 1px 1px #fff;
}

.path {
  display: block;
  width: 100%;
  height: 21px;
  margin-top: 8px;
  padding: 0 3px;
  border: 2px solid;
  border-color: #505050 #f4f2ee #f4f2ee #505050;
  background: #fff;
}

.buttons {
  display: flex;
  justify-content: flex-end;
  gap: 6px;
  margin-top: 7px;
}

.btn {
  width: 75px;
  height: 23px;
  background: #d4d0c8;
  border: 1px solid;
  border-color: #fff #404040 #404040 #fff;
  box-shadow: inset -1px -1px #808080;
}

.marked {
  position: relative;
}

.ink {
  position: absolute;
  left: 18px;
  top: -2px;
  width: 50px;
  height: 30px;
}

.disk {
  width: 111px;
  margin: 8px 0 0 14px;
}

.disk .drop {
  color: #808080;
}

.note {
  display: flex;
  gap: 6px;
  margin: 11px 0 0 16px;
}

.outro {
  margin: 9px 0 0 2px;
  white-space: nowrap;
}

.btn.remove {
  display: block;
  margin: 6px 0 0 auto;
}

.pointer {
  position: absolute;
  left: 88px;
  top: 88px;
  width: 13px;
  height: 21px;
}
```
